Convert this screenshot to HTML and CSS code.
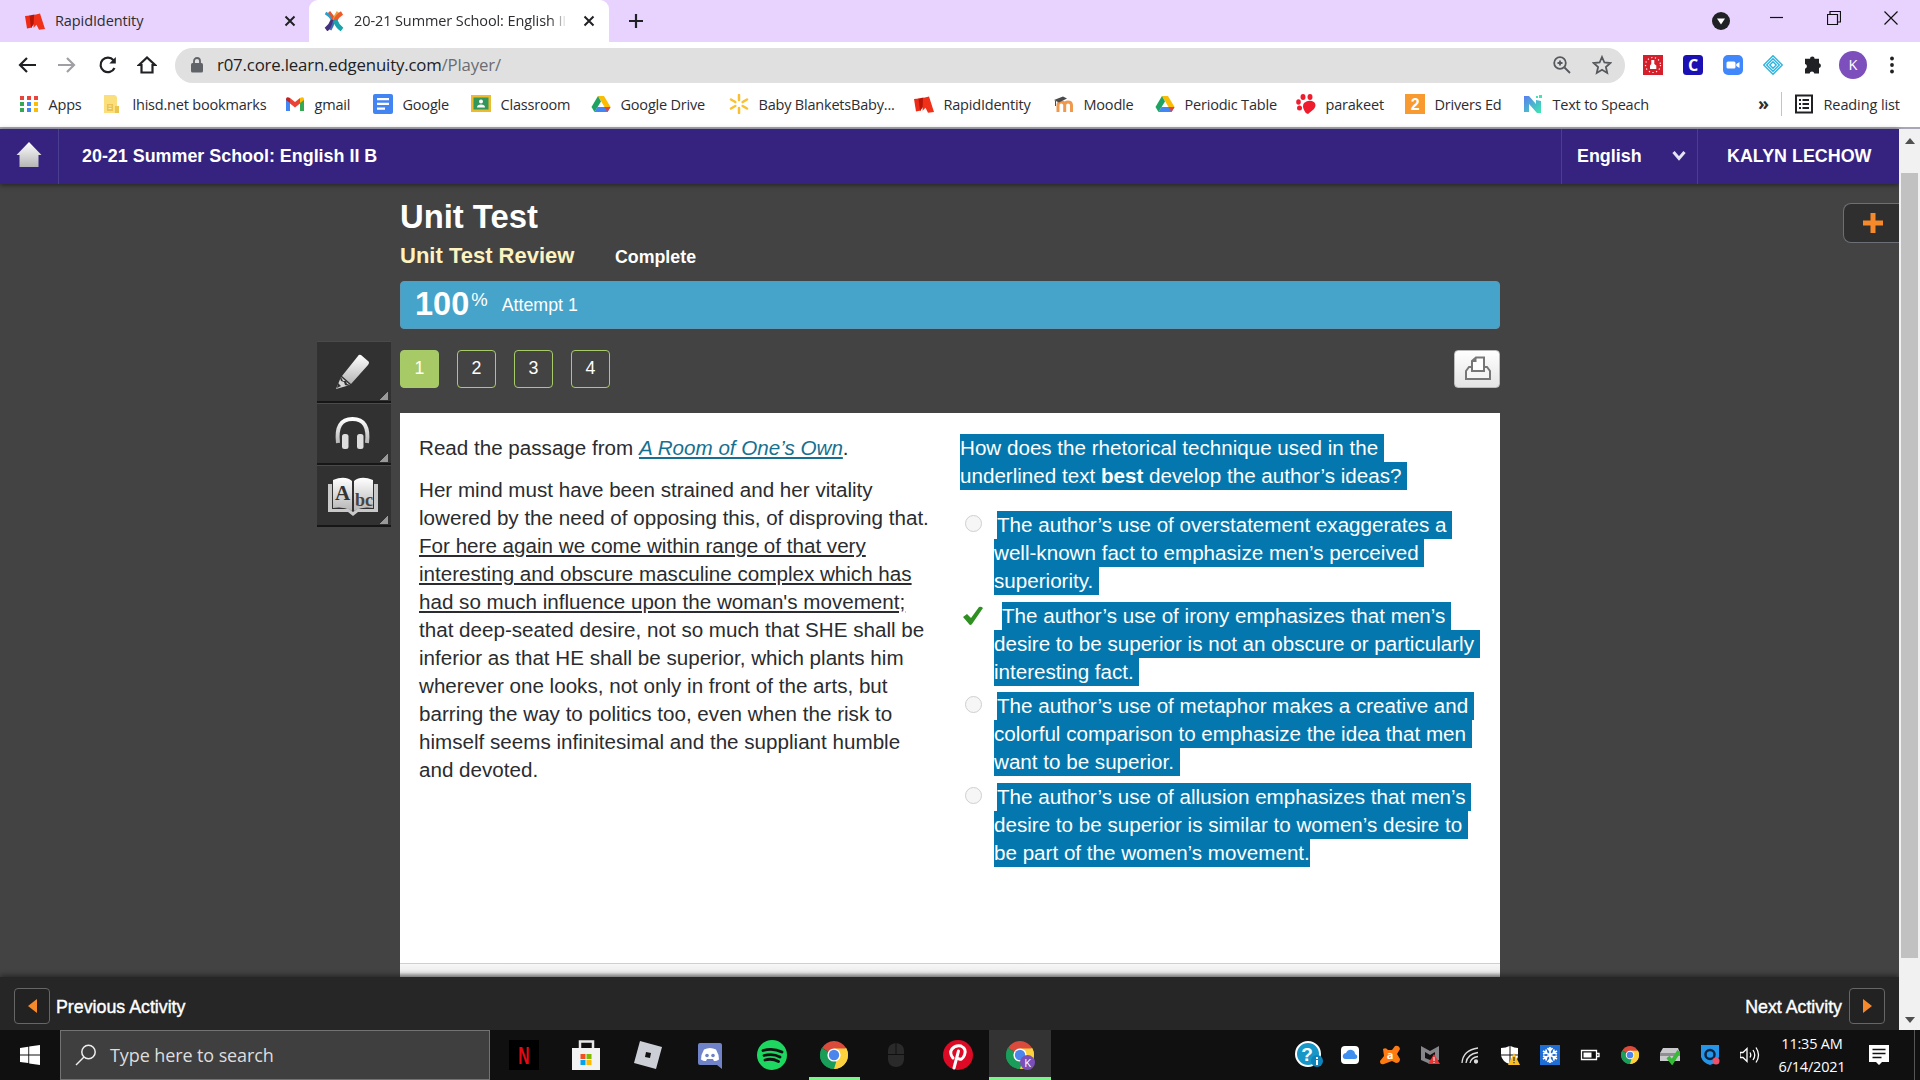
FILE: index.html
```
<!DOCTYPE html>
<html lang="en">

<head>
    <meta charset="UTF-8">
    <link rel="stylesheet" href="styles.css">
    <title>20-21 Summer School: English II B</title>
</head>

<body>
    <!-- shared icons -->
    <svg class="defs" width="0" height="0">
        <defs>
            <linearGradient id="silver" x1="0" y1="0" x2="0" y2="1">
                <stop offset="0" stop-color="#fff" />
                <stop offset="1" stop-color="#b5b5b5" />
            </linearGradient>
            <linearGradient id="ngrad" x1="0" y1="0" x2="1" y2="1">
                <stop offset="0" stop-color="#5b7df0" />
                <stop offset="1" stop-color="#3de8b0" />
            </linearGradient>
            <symbol id="rapid" viewBox="0 0 20 20">
                <path fill="#ee2b16" d="M0 5l5-.5 2 12-5 1z" />
                <path fill="#b71507" d="M4.500 4.500l5-1v9l-3.500 4.500z" />
                <path fill="#f03018" d="M9 4l6-1.500 5 15.500-6 .8-2.500-5-3 3z" />
            </symbol>
            <symbol id="drive" viewBox="0 0 20 20">
                <path fill="#fbbc04" d="M7 2h6l6.500 11h-6z" />
                <path fill="#1ea362" d="M7 2l3 5.500L3.500 18 .5 13z" />
                <path fill="#4285f4" d="M6.500 13h13l-3 5h-13z" />
                <path fill="#ea4335" d="M13.500 13h6l-3 5z" />
            </symbol>
            <symbol id="chrome" viewBox="0 0 28 28">
                <path fill="#db4b3c" d="M14 14L1.900 7A14 14 0 0 1 26.100 7z" />
                <path fill="#fdd13e" d="M14 14L26.100 7A14 14 0 0 1 14 28z" />
                <path fill="#1a9d58" d="M14 14V28A14 14 0 0 1 1.900 7z" />
                <path fill="#fdd13e" d="M14 7.500h12.400a14 14 0 0 1-12.400 20.500l5.800-10.500z" />
                <path fill="#1a9d58" d="M1.900 7l6.400 10.500 8 3L14 28A14 14 0 0 1 1.900 7z" />
                <circle cx="14" cy="14" r="6.600" fill="#fff" />
                <circle cx="14" cy="14" r="5.200" fill="#4c86ec" />
            </symbol>
        </defs>
    </svg>

    <!-- tabs -->
    <div class="tabs">
        <div class="tab">
            <svg class="fav" viewBox="0 0 20 20"><use href="#rapid" /></svg>
            <span class="tab-title">RapidIdentity</span>
            <svg class="x" viewBox="0 0 12 12"><path d="M1.500 1.500l9 9M10.500 1.500l-9 9" /></svg>
        </div>
        <div class="tab active">
            <svg class="fav" viewBox="0 0 20 20">
                <g fill="none">
                    <path stroke="#2a9fd0" stroke-width="3" d="M1.500 2Q7 5 9.500 10" />
                    <path stroke="#e2572d" stroke-width="3" d="M5 1Q9 5 10 10" />
                    <path stroke="#f0a23a" stroke-width="3" d="M14 1Q11 5 10 10" />
                    <path stroke="#ef5a2a" stroke-width="4" d="M18 2Q13 5 11 10" />
                    <path stroke="#47307e" stroke-width="4.500" d="M2 18.500Q7 15 9 9" />
                    <path stroke="#3b6fb5" stroke-width="2" d="M6.500 19Q9 15 10 10" />
                    <path stroke="#17a2ac" stroke-width="4.500" d="M18 18.500Q13 15 11 9" />
                </g>
            </svg>
            <span class="tab-title fade">20-21 Summer School: English II B</span>
            <svg class="x" viewBox="0 0 12 12"><path d="M1.500 1.500l9 9M10.500 1.500l-9 9" /></svg>
        </div>
        <svg class="newtab" viewBox="0 0 16 16"><path d="M8 1v14M1 8h14" /></svg>
        <div class="winbtns">
            <svg viewBox="0 0 20 20" width="20" height="20" class="tabsearch"><circle cx="10" cy="10" r="9" fill="#202124" /><path fill="#fff" d="M6 7.500h8l-4 6z" /></svg>
            <svg viewBox="0 0 14 14" width="14" height="14"><path d="M0 6.500h13" /></svg>
            <svg viewBox="0 0 14 14" width="14" height="14"><path d="M.5 3.500h10v10h-10zM3 3V.5h10.500v10.500H11" /></svg>
            <svg viewBox="0 0 14 14" width="14" height="14"><path d="M.5 .5l13 13M13.500 .5l-13 13" /></svg>
        </div>
    </div>

    <!-- address bar -->
    <div class="toolbar">
        <svg class="nav" viewBox="0 0 20 20"><path d="M19 10H3M10 3l-7 7 7 7" /></svg>
        <svg class="nav off" viewBox="0 0 20 20"><path d="M1 10h16M10 3l7 7-7 7" /></svg>
        <svg class="nav" viewBox="0 0 20 20"><path d="M17.500 13A7.300 7.300 0 1 1 16.500 5.200" /><path d="M18.800 2v6.500h-6.500z" fill="#202124" stroke="none" /></svg>
        <svg class="nav" viewBox="0 0 20 20"><path d="M2 10l8-7.500L18 10h-2.500v7.500h-11V10z" /></svg>
        <div class="address">
            <svg width="12" height="16" viewBox="0 0 12 16"><path fill="none" stroke="#5f6368" stroke-width="1.800" d="M3 7V4a3 3 0 0 1 6 0v3" /><rect y="6" width="12" height="9.500" rx="1.500" fill="#5f6368" /></svg>
            <span class="url">r07.core.learn.edgenuity.com<i>/Player/</i></span>
            <svg class="addr-icon" viewBox="0 0 20 20"><circle cx="8" cy="8" r="5.800" /><path d="M12.500 12.500l5.500 5.500M5.500 8h5M8 5.500v5" /></svg>
            <svg class="addr-icon star" viewBox="0 0 20 20"><path d="M10 2l2.400 5.500 6 .5-4.500 4 1.300 5.900L10 14.800l-5.200 3.100L6.100 12 1.600 8l6-.5z" /></svg>
        </div>
        <div class="exts">
            <svg viewBox="0 0 20 20"><path fill="#d5202c" d="M0 0h20v20H0z" /><circle cx="10" cy="10" r="7.500" fill="none" stroke="#fff" stroke-width="1.200" stroke-dasharray="1.200 2.500" /><path fill="#fff" d="M8.300 5h3v4l2 1.500v3.500H7v-3.500l1.300-1.500z" /></svg>
            <svg viewBox="0 0 20 20"><rect width="20" height="20" rx="3.500" fill="#1b10b4" /><text x="10" y="15.500" class="c">C</text></svg>
            <svg viewBox="0 0 20 20"><rect width="20" height="20" rx="5" fill="#4087fc" /><rect x="3.500" y="6.500" width="9" height="7" rx="1.500" fill="#fff" /><path fill="#fff" d="M13.300 9l3.200-2v6l-3.200-2z" /></svg>
            <svg viewBox="0 0 20 20" fill="none" stroke="#2fb3e0" stroke-width="1.400"><path d="M10 .7l9.300 9.300-9.300 9.300L.7 10zM10 3.700l6.300 6.300-6.300 6.300L3.700 10zM10 6.800l3.200 3.200-3.200 3.200L6.800 10z" /></svg>
            <svg viewBox="0 0 20 20"><path fill="#202124" d="M7 3.800a2.300 2.300 0 0 1 4.600 0h4.400V8.300a2.400 2.400 0 0 1 0 4.700v5.500h-4.700a2.400 2.400 0 0 0-4.700 0H2v-4.800a2.400 2.400 0 0 0 0-4.700V3.800z" /></svg>
        </div>
        <div class="avatar">K</div>
        <svg class="dots" width="6" height="18" viewBox="0 0 6 18"><circle cx="3" cy="2.500" r="1.900" /><circle cx="3" cy="9" r="1.900" /><circle cx="3" cy="15.500" r="1.900" /></svg>
    </div>

    <!-- bookmarks -->
    <div class="bookmarks">
        <div class="bm"><svg viewBox="0 0 20 20"><path fill="#e8453c" d="M1 2h4v4H1zM8 2h4v4H8zM15 2h4v4h-4z" /><path fill="#34a853" d="M1 8h4v4H1z" /><path fill="#4285f4" d="M8 8h4v4H8zM8 14h4v4H8z" /><path fill="#fbbc04" d="M15 8h4v4h-4zM15 14h4v4h-4z" /><path fill="#34a853" d="M1 14h4v4H1z" /></svg><span>Apps</span></div>
        <div class="bm"><svg viewBox="0 0 20 20"><path fill="#fadf7c" d="M1 1h11l2 2v16H1z" /><path fill="#e9c452" d="M4 10h6v7H4zM12 12h4v7h-4z" /><path fill="#fdeeb0" d="M5.500 11.500h3v1h-3zM5.500 14h3v1h-3z" /></svg><span>lhisd.net bookmarks</span></div>
        <div class="bm"><svg viewBox="0 0 20 20"><path fill="#4285f4" d="M1 5l4 3v9H1z" /><path fill="#34a853" d="M15 8l4-3v12h-4z" /><path fill="#ea4335" d="M5 4l5 4 5-4v5.500l-5 4-5-4z" /><path fill="#c5221f" d="M1 4.500Q2 2.500 5 4v5L1 6z" /><path fill="#fbbc04" d="M19 4.500Q18 2.500 15 4v5l4-3z" /></svg><span>gmail</span></div>
        <div class="bm"><svg viewBox="0 0 20 20"><rect width="20" height="20" rx="2" fill="#4384f3" /><path fill="#fff" d="M4 4h12v2.200H4zM4 8.800h12V11H4zM4 13.600h8v2.200H4z" /></svg><span>Google</span></div>
        <div class="bm"><svg viewBox="0 0 20 20"><path fill="#edbb2d" d="M0 1h20v17H0z" /><path fill="#31975a" d="M2.500 3.500h15v12h-15z" /><circle cx="10" cy="7.500" r="2" fill="#fff" /><path fill="#fff" d="M6 13.500q0-3 4-3t4 3z" /></svg><span>Classroom</span></div>
        <div class="bm"><svg viewBox="0 0 20 20"><use href="#drive" /></svg><span>Google Drive</span></div>
        <div class="bm"><svg viewBox="0 0 20 20" fill="none" stroke="#fbc02e" stroke-width="2.500" stroke-linecap="round"><path d="M10 1v5M10 14v5M2 5.500L6.300 8M13.700 12l4.300 2.500M2 14.500L6.300 12M13.700 8L18 5.500" /></svg><span>Baby BlanketsBaby...</span></div>
        <div class="bm"><svg viewBox="0 0 20 20"><use href="#rapid" /></svg><span>RapidIdentity</span></div>
        <div class="bm"><svg viewBox="0 0 20 20"><path fill="none" stroke="#f0994d" stroke-width="3" d="M4 18V11Q4 8 7.300 8T10.700 11V18M10.700 11Q10.700 8 14 8T17.500 11V18" /><path fill="#4a4a4a" d="M0 6l9-3.500 4 2L5 8.500zM1 7h1v5H1z" /></svg><span>Moodle</span></div>
        <div class="bm"><svg viewBox="0 0 20 20"><use href="#drive" /></svg><span>Periodic Table</span></div>
        <div class="bm"><svg viewBox="0 0 20 20" fill="#ee1c2c"><ellipse cx="7" cy="3" rx="2.500" ry="3" /><ellipse cx="14" cy="3" rx="2.500" ry="3" /><ellipse cx="2.500" cy="8" rx="2.300" ry="2.800" /><ellipse cx="3.500" cy="14" rx="2.500" ry="2.500" /><path d="M8 9q5-4 10-1 3 3 0 7l-6 5q-3-1-4-4-2-4 0-7z" /></svg><span>parakeet</span></div>
        <div class="bm"><svg viewBox="0 0 20 20"><path fill="#f89a30" d="M0 0h20v20H0z" /><text x="10" y="16" class="two">2</text></svg><span>Drivers Ed</span></div>
        <div class="bm"><svg viewBox="0 0 20 20"><path fill="url(#ngrad)" d="M1 2h5l7 8V6l5 1v12h-4L6 10v8H1z" /><path fill="#3de8b0" d="M13 2h2v2h-2zM16 1h3v3h-3z" /></svg><span>Text to Speach</span></div>
        <div class="more">&raquo;</div>
        <div class="bm reading"><svg viewBox="0 0 20 20"><rect x="2" y="1.500" width="16" height="17" fill="none" stroke="#202124" stroke-width="2" /><path fill="#202124" d="M5 5h2v2H5zM8.500 5H15v2H8.500zM5 9h2v2H5zM8.500 9H15v2H8.500zM5 13h2v2H5zM8.500 13H15v2H8.500z" /></svg><span>Reading list</span></div>
    </div>

    <div class="viewport">
        <div class="page">
            <div class="header">
                <div class="home"><svg width="26" height="28" viewBox="0 0 26 28"><path fill="url(#silver)" d="M13 1l12.500 13h-3v12h-19V14h-3z" /></svg></div>
                <div class="course">20-21 Summer School: English II B</div>
                <div class="lang">English <svg width="14" height="12" viewBox="0 0 14 12"><path fill="none" stroke="#e4e4f4" stroke-width="3" d="M1.500 2l5.500 6.500L12.500 2" /></svg></div>
                <div class="user">KALYN LECHOW</div>
            </div>

            <div class="content">
                <div class="tools">
                    <div class="tool"><svg width="38" height="38" viewBox="0 0 38 38"><path fill="url(#silver)" d="M27 2l7 6q2 1 0 4L17 31l-9-8L24 3q1-2 3-1z" /><path fill="#d5d5d5" d="M7 24l9 8L2 36z" /><path fill="#333" d="M4 30l3 3-4 2zM7 24l2 4 3 0 1 3 3 1-1 1-4-1-1-3-3-1-1-3z" /></svg></div>
                    <div class="tool"><svg width="38" height="38" viewBox="0 0 38 38"><path fill="none" stroke="url(#silver)" stroke-width="4" d="M4 28Q1 4 18.500 4T33 28" /><rect x="8" y="19" width="6.500" height="15" rx="2.500" fill="#ddd" /><rect x="23" y="19" width="6.500" height="15" rx="2.500" fill="#ddd" /></svg></div>
                    <div class="tool"><svg width="50" height="40" viewBox="0 0 50 40"><path fill="#c9c9c9" d="M0 8h4v25h17l4 3 4-3h17V8h4v28H30l-5 4-5-4H0z" /><path fill="url(#silver)" d="M5 4q12-5 19 1v30q-8-5-19-3zM45 4q-12-5-19 1v30q8-5 19-3z" /><text x="7" y="24" class="bigA">A</text><text x="27" y="30" class="bc">bc</text></svg></div>
                </div>

                <div class="main">
                    <h1>Unit Test</h1>
                    <div class="sub"><h2>Unit Test Review</h2><span>Complete</span></div>
                    <div class="score"><b>100</b><sup>%</sup><span>Attempt 1</span></div>
                    <div class="pager">
                        <a class="on">1</a><a>2</a><a>3</a><a>4</a>
                        <div class="print"><svg width="28" height="26" viewBox="0 0 28 26"><path fill="#f6f6f6" stroke="#777" stroke-width="2" d="M7 11H5l-3 4v8h24v-8l-3-4h-2" /><path fill="#fff" stroke="#777" stroke-width="2" d="M8 15V5l4-3.500h8V15z" /><path fill="#777" d="M7.500 6l5-5v5z" /></svg></div>
                    </div>
                    <div class="card">
                        <div class="cols">
                            <div class="passage">
                                <p>Read the passage from <a>A Room of One’s Own</a>.</p>
                                <p>Her mind must have been strained and her vitality<br>
                                lowered by the need of opposing this, of disproving that.<br>
                                <u>For here again we come within range of that very<br>
                                interesting and obscure masculine complex which has<br>
                                had so much influence upon the woman's movement;</u><br>
                                that deep-seated desire, not so much that SHE shall be<br>
                                inferior as that HE shall be superior, which plants him<br>
                                wherever one looks, not only in front of the arts, but<br>
                                barring the way to politics too, even when the risk to<br>
                                himself seems infinitesimal and the suppliant humble<br>
                                and devoted.</p>
                            </div>
                            <div class="question">
                                <div class="ask">
                                    <span class="sel">How does the rhetorical technique used in the </span>
                                    <span class="sel">underlined text <b>best</b> develop the author’s ideas? </span>
                                </div>
                                <div class="option">
                                    <i class="radio"></i>
                                    <div>
                                        <span class="sel first">The author’s use of overstatement exaggerates a </span>
                                        <span class="sel">well-known fact to emphasize men’s perceived </span>
                                        <span class="sel">superiority. </span>
                                    </div>
                                </div>
                                <div class="option correct">
                                    <svg class="check" width="22" height="20" viewBox="0 0 22 20"><path fill="#2f8f22" d="M1 11l4-3 4 4L17 1q2-1 4 1L10 18q-2 2-3 0z" /></svg>
                                    <div>
                                        <span class="sel first">The author’s use of irony emphasizes that men’s </span>
                                        <span class="sel">desire to be superior is not an obscure or particularly </span>
                                        <span class="sel">interesting fact. </span>
                                    </div>
                                </div>
                                <div class="option">
                                    <i class="radio"></i>
                                    <div>
                                        <span class="sel first">The author’s use of metaphor makes a creative and </span>
                                        <span class="sel">colorful comparison to emphasize the idea that men </span>
                                        <span class="sel">want to be superior. </span>
                                    </div>
                                </div>
                                <div class="option">
                                    <i class="radio"></i>
                                    <div>
                                        <span class="sel first">The author’s use of allusion emphasizes that men’s </span>
                                        <span class="sel">desire to be superior is similar to women’s desire to </span>
                                        <span class="sel">be part of the women’s movement.</span>
                                    </div>
                                </div>
                            </div>
                        </div>
                        <div class="card-foot"></div>
                    </div>
                </div>

                <div class="plus"><svg width="20" height="20" viewBox="0 0 20 20"><path fill="#f68a2a" d="M7.500 0h5v7.500H20v5h-7.500V20h-5v-7.500H0v-5h7.500z" /></svg></div>
            </div>

            <div class="footer">
                <div class="arrow"><svg width="9" height="14" viewBox="0 0 9 14"><path fill="#f68a2a" d="M9 0v14L0 7z" /></svg></div>
                <span>Previous Activity</span>
                <span class="next">Next Activity</span>
                <div class="arrow"><svg width="9" height="14" viewBox="0 0 9 14"><path fill="#f68a2a" d="M0 0v14l9-7z" /></svg></div>
            </div>
        </div>
        <div class="scrollbar">
            <svg width="10" height="6" viewBox="0 0 10 6"><path fill="#505050" d="M5 0l5 6H0z" /></svg>
            <div class="thumb"></div>
            <svg class="down" width="10" height="6" viewBox="0 0 10 6"><path fill="#505050" d="M5 6l5-6H0z" /></svg>
        </div>
    </div>

    <!-- windows taskbar -->
    <div class="taskbar">
        <div class="start"><svg width="20" height="20" viewBox="0 0 20 20"><path fill="#fff" d="M0 3l8.300-1.200v7.700H0zM9.200 1.600L20 0v9.500H9.200zM0 10.400h8.300v7.700L0 17zM9.200 10.400H20V20L9.200 18.400z" /></svg></div>
        <div class="search">
            <svg width="22" height="22" viewBox="0 0 22 22"><circle cx="13.500" cy="8" r="6.700" fill="none" stroke="#eee" stroke-width="1.500" /><path stroke="#eee" stroke-width="1.500" d="M9 13L1 21" /></svg>
            <span>Type here to search</span>
        </div>
        <div class="apps">
            <div><svg viewBox="0 0 30 30"><path fill="#000" d="M0 0h30v30H0z" /><text x="15" y="24" class="nf">N</text></svg></div>
            <div><svg viewBox="0 0 30 30"><path fill="none" stroke="#e8e8e8" stroke-width="2.500" d="M9 9V1.500h13V9" /><path fill="#f2f2f2" d="M1 8h28v22H1z" /><path fill="#f25022" d="M9.500 14h5v5h-5z" /><path fill="#7fba00" d="M15.500 14h5v5h-5z" /><path fill="#00a4ef" d="M9.500 20h5v5h-5z" /><path fill="#ffb900" d="M15.500 20h5v5h-5z" /></svg></div>
            <div><svg viewBox="0 0 30 30"><path fill="#ccd0d6" d="M7 1l22 6-6 22-22-6z" /><path fill="#111" d="M13 12l5 1-1 5-5-1z" /></svg></div>
            <div><svg viewBox="0 0 30 30"><path fill="#7083c8" d="M5 3h20q2 0 2 2v24l-5-4H5q-2 0-2-2V5q0-2 2-2z" /><path fill="#fff" d="M9 9.500q6-3 12 0 3 5 3 10-3 2-5 1.500l-1-2h-6l-1 2q-2 .5-5-1.500 0-5 3-10z" /><circle cx="12" cy="15.500" r="1.800" fill="#7083c8" /><circle cx="18" cy="15.500" r="1.800" fill="#7083c8" /></svg></div>
            <div><svg viewBox="0 0 30 30"><circle cx="15" cy="15" r="15" fill="#1ed760" /><path fill="none" stroke="#111" stroke-width="2.800" stroke-linecap="round" d="M6 10.500Q16 7.500 25 12M7 15.500Q16 13 23 17M8 20Q15 18 21.500 21.500" /></svg></div>
            <div class="open"><svg viewBox="-1 -1 30 30"><use href="#chrome" width="28" height="28" /></svg></div>
            <div><svg viewBox="0 0 30 30" fill="#2a2a2a"><path d="M14.500 3v11H7v-3q0-7 7.500-8zM15.500 3v11H23v-3q0-7-7.500-8zM7 15h16v5q-1 7-8 7t-8-7z" /></svg></div>
            <div><svg viewBox="0 0 30 30"><circle cx="15" cy="15" r="15" fill="#dc0a25" /><path fill="none" stroke="#fff" stroke-width="3" stroke-linecap="round" d="M10 18Q6 13 9 9T18 6Q24 9 21.500 15T15 18.500M15.500 11L11 28" /></svg></div>
            <div class="open current"><svg viewBox="-1 -1 30 30"><use href="#chrome" width="28" height="28" /><circle cx="21.500" cy="21.500" r="7.500" fill="#7a4fb8" /><text x="21.500" y="25.500" class="k">K</text></svg></div>
        </div>
        <div class="tray">
            <svg class="big" viewBox="0 0 28 28"><circle cx="13" cy="13" r="12" fill="#1797c8" stroke="#fff" stroke-width="2" /><text x="12" y="20" class="q">?</text><circle cx="22" cy="20" r="6" fill="#0e84bc" /><path fill="#fff" d="M21 16h2v2h-2zM21 19h2v5h-2z" /></svg>
            <svg viewBox="0 0 20 20"><rect x="1" y="1" width="18" height="18" rx="4" fill="#fff" /><path fill="#3f8ff0" d="M5 14q-3-1-2-4 1-2 3-2 2-4 6-3 3 1 3 4 3 1 2 4-1 1-2 1z" /></svg>
            <svg viewBox="0 0 20 20"><path fill="#ff7a10" d="M3 4q3-2 5 1h4l3-4q4-1 5 3l-3 5 3 5q0 4-4 4l-4-2-8 3q-4 1-4-3l4-5z" /><text x="10" y="14" class="a">a</text></svg>
            <svg viewBox="0 0 20 20"><path fill="#85858a" d="M1 1l9 5 9-5v14l-9 4-9-4z" /><path fill="#111" d="M5 7l5 3 5-3v6l-5 2-5-2z" /><path fill="#e93434" d="M14 9l6 10H8z" /><path fill="#fff" d="M13.500 12h1v4h-1zM13.500 17h1v1h-1z" /></svg>
            <svg viewBox="0 0 20 20" fill="none" stroke="#ddd" stroke-width="1.300"><path d="M2 18Q3 5 18 3M6 18Q7 9 18 7.500M10 18Q11 12.500 18 11.500" /><circle cx="16" cy="16.500" r="1.500" fill="#ddd" /></svg>
            <svg viewBox="0 0 20 20"><path fill="#fff" d="M9.500 1v8.500H1V3q5 0 8.500-2zM10.500 1q4 2 7.500 2v6.500h-7.500zM1 10.500h8.500v8.500q-7-2-8.500-8.500zM10.500 10.500H18q0 6-7.500 8.500z" /><path fill="#fbbf26" d="M14 8l6 12H8z" /><path fill="#333" d="M13.400 12h1.200v4h-1.200zM13.400 17h1.200v1.200h-1.200z" /></svg>
            <svg viewBox="0 0 20 20"><path fill="#1f6ed6" d="M0 0h20v20H0z" /><path fill="none" stroke="#fff" stroke-width="1.700" d="M10 2v16M3 6l14 8M17 6L3 14M7.500 3L10 6l2.500-3M7.500 17l2.500-3 2.500 3M3 9l3.500-1L6 4.500M17 9l-3.500-1 .5-3.500M3 11l3.500 1-.5 3.500M17 11l-3.500 1 .5 3.500" /></svg>
            <svg viewBox="0 0 20 20"><path fill="none" stroke="#fff" stroke-width="1.300" d="M1.500 5.500h15v9h-15zM17 8.500h2v3h-2" /><path fill="#fff" d="M3.500 7.500h8v5h-8z" /></svg>
            <svg viewBox="0 0 20 20"><use href="#chrome" x="1" y="1" width="18" height="18" /></svg>
            <svg viewBox="0 0 20 20"><path fill="#c9c9cc" d="M3 3h15l2 5v8H0V8z" /><path fill="#8e8e93" d="M0 8h20v3H0z" /><path fill="none" stroke="#38ba38" stroke-width="4" d="M8 12l4 5 7-11" /></svg>
            <svg viewBox="0 0 20 20"><path fill="#2495e8" d="M1 0h18v12q-2 6-9 8-7-2-9-8z" /><circle cx="10" cy="9.500" r="4.500" fill="none" stroke="#0c2340" stroke-width="2.500" /><circle cx="16" cy="16" r="3.500" fill="#f1506b" /></svg>
            <svg viewBox="0 0 20 20" fill="none" stroke="#fff" stroke-width="1.300"><path d="M0 7.500h3L7 3.500v13l-4-4H0zM10 7.500q1.500 2.500 0 5M13 5q3.500 5 0 10M16 2.500q5 7.500 0 15" /></svg>
        </div>
        <div class="clock">11:35 AM<br>6/14/2021</div>
        <svg class="notes" width="20" height="20" viewBox="0 0 20 20"><path fill="#fff" d="M0 0h20v17h-7l-3 3-3-3H0z" /><path stroke="#111" stroke-width="1.500" d="M3.500 4.500h13M3.500 8.500h13M3.500 12.500h9" /></svg>
        <div class="desk"></div>
    </div>
</body>

</html>
```
FILE: styles.css
```
* {
    box-sizing: border-box;
}

body {
    margin: 0;
    width: 1920px;
    height: 1080px;
    overflow: hidden;
    display: flex;
    flex-direction: column;
    font-family: "Open Sans", "Noto Sans", sans-serif;
    font-size: 14.5px;
    color: #2c2d31;
    background: #fff;
}

svg {
    flex: none;
    display: block;
}

.defs {
    position: absolute;
}

/* tabs */
.tabs {
    height: 42px;
    flex: none;
    display: flex;
    align-items: center;
    background: #e8d3fe;
}

.tab {
    width: 309px;
    height: 42px;
    display: flex;
    align-items: center;
    padding: 0 13px 0 25px;
    letter-spacing: -.1px;
}

.tab.active {
    width: 300px;
    padding: 0 14px 0 15px;
    background: #fff;
    border-radius: 9px 9px 0 0;
}

.fav {
    width: 20px;
    height: 20px;
    margin-right: 10px;
}

.tab-title {
    flex: 1;
    white-space: nowrap;
    overflow: hidden;
    padding-bottom: 2px;
}

.tab-title.fade {
    flex: none;
    width: 213px;
    margin-right: 16px;
    -webkit-mask-image: linear-gradient(to right, #000 92%, transparent);
    mask-image: linear-gradient(to right, #000 92%, transparent);
}

.x {
    width: 12px;
    height: 12px;
    fill: none;
    stroke: #202124;
    stroke-width: 2;
}

.tab .x {
    margin-left: auto;
}

.newtab {
    width: 16px;
    height: 16px;
    margin-left: 19px;
    fill: none;
    stroke: #202124;
    stroke-width: 2.2;
}

.winbtns {
    margin-left: auto;
    display: flex;
    align-items: center;
    padding-right: 22px;
    padding-bottom: 6px;
    fill: none;
    stroke: #111;
    stroke-width: 1.2;
    gap: 43px;
}

.tabsearch {
    stroke: none;
    margin-top: 6px;
    margin-right: -4px;
}

/* address bar */
.toolbar {
    height: 46px;
    flex: none;
    display: flex;
    align-items: center;
    padding-left: 17px;
}

.nav {
    width: 20px;
    height: 20px;
    margin-right: 20px;
    fill: none;
    stroke: #202124;
    stroke-width: 2.2;
}

.nav.off {
    stroke: #a0a0a4;
}

.address {
    width: 1450px;
    height: 35px;
    border-radius: 18px;
    background: #e0e0e0;
    display: flex;
    align-items: center;
    padding: 0 13px 0 16px;
    margin-left: -2px;
}

.url {
    flex: 1;
    margin-left: 14px;
    padding-bottom: 2px;
    font-size: 16.8px;
    color: #202124;
    letter-spacing: -.17px;
}

.url i {
    font-style: normal;
    color: #6a6d72;
}

.addr-icon {
    width: 20px;
    height: 20px;
    margin-left: 20px;
    fill: none;
    stroke: #55585d;
    stroke-width: 1.8;
}

.exts {
    display: flex;
    gap: 20px;
    margin-left: 18px;
}

.exts svg {
    width: 20px;
    height: 20px;
}

.avatar {
    width: 28px;
    height: 28px;
    margin-left: 16px;
    border-radius: 50%;
    background: #7c4fbd;
    color: #fff;
    text-align: center;
    line-height: 28px;
}

.dots {
    margin-left: 22px;
    fill: #202124;
}

.c {
    font: bold 16px "Open Sans", sans-serif;
    text-anchor: middle;
    fill: #fff;
}

/* bookmarks */
.bookmarks {
    height: 41px;
    flex: none;
    display: grid;
    grid-template-columns: 84px 182px 88px 98px 120px 138px 185px 140px 101px 141px 109px 118px 235px 23px 132px;
    padding-left: 19px;
    padding-bottom: 7px;
    align-items: center;
    border-bottom: 2px solid #a9a6b8;
    letter-spacing: -.2px;
}

.bm {
    display: flex;
    align-items: center;
    white-space: nowrap;
}

.bm svg {
    width: 20px;
    height: 20px;
    margin-right: 9.5px;
}

.two {
    font: bold 16px "Liberation Sans", sans-serif;
    text-anchor: middle;
    fill: #fff;
}

.more {
    font-size: 18px;
    font-weight: bold;
    line-height: 20px;
    padding-bottom: 3px;
}

.reading {
    border-left: 1px solid #c4c4c8;
    padding: 2px 0 2px 12px;
    letter-spacing: -.1px;
}

/* page */
.viewport {
    height: 901px;
    flex: none;
    display: flex;
    font-family: "Liberation Sans", Arial, sans-serif;
    font-size: 17.8px;
}

.page {
    width: 1899px;
    display: flex;
    flex-direction: column;
    background: #434343;
    color: #fff;
}

.header {
    height: 55px;
    flex: none;
    display: flex;
    align-items: stretch;
    background: #35237f;
    font-weight: bold;
    font-size: 17.9px;
    line-height: 54px;
    box-shadow: 0 1px 5px rgba(0, 0, 0, .5);
}

.home {
    width: 59px;
    padding: 12px 16px;
    border-right: 1px solid #4b3d8f;
}

.course {
    flex: 1;
    padding-left: 23px;
}

.lang {
    width: 137px;
    padding: 0 0 1px 15px;
    display: flex;
    align-items: center;
    gap: 30px;
    border-left: 1px solid #4b3d8f;
    border-right: 1px solid #4b3d8f;
}

.user {
    width: 201px;
    padding-left: 29px;
}

.content {
    height: 793px;
    flex: none;
    display: flex;
    align-items: flex-start;
    overflow: hidden;
}

.tools {
    width: 74px;
    margin: 157px 9px 0 317px;
}

.tool {
    height: 62px;
    display: flex;
    align-items: center;
    justify-content: center;
    padding-right: 2px;
    background: linear-gradient(135deg, transparent 50%, #999 50%) right 3px bottom 1px / 8px 8px no-repeat #313131;
    border-bottom: 2px solid #161616;
    border-top: 1px solid #4a4a4a;
}

.bigA {
    font: bold 21px "Liberation Serif", serif;
    fill: #333;
}

.bc {
    font: bold 18px "Liberation Serif", serif;
    fill: #444;
}

.main {
    width: 1100px;
}

h1 {
    margin: 14px 0 0;
    font-size: 32.8px;
    line-height: 37px;
}

.sub {
    display: flex;
    align-items: baseline;
    margin-top: 7px;
    line-height: 28px;
    font-weight: bold;
}

.sub h2 {
    margin: 0;
    width: 215px;
    font-size: 22px;
    color: #fdf3c0;
}

.score {
    height: 48px;
    margin-top: 10px;
    padding-left: 14px;
    display: flex;
    align-items: center;
    background: #46a3c9;
    border: 1px solid #5d9ab8;
    border-radius: 4px;
}

.score b {
    font-size: 32.5px;
    padding-bottom: 2px;
}

.score sup {
    margin: 0 14px 10px 2px;
    font-size: 18.5px;
    line-height: 18px;
}

.pager {
    display: flex;
    gap: 18px;
    margin-top: 21px;
}

.pager a {
    width: 39px;
    height: 38px;
    border: 1.5px solid #a8cb6a;
    border-radius: 4px;
    text-align: center;
    line-height: 34px;
}

.pager a.on {
    background: #a7ca67;
}

.print {
    width: 46px;
    height: 38px;
    margin-left: auto;
    padding: 5px 0 0 9px;
    border-radius: 4px;
    border: 1px solid #bbb;
    background: linear-gradient(#fff, #e4e4e4);
}

.card {
    height: 565px;
    margin-top: 25px;
    background: #fff;
    color: #2a2c30;
    font-size: 20.62px;
    line-height: 28px;
    display: flex;
    flex-direction: column;
}

.cols {
    flex: 1;
    display: flex;
    padding: 21px 0 0 19px;
    white-space: nowrap;
}

.passage {
    width: 541px;
}

.passage p {
    margin: 0 0 14px;
}

.passage a {
    color: #17708f;
    font-style: italic;
    text-decoration: underline;
}

.passage a,
.passage u {
    text-decoration-thickness: 2px;
    text-underline-offset: 2px;
}

.ask {
    margin-bottom: 21px;
}

/* selected text */
.sel {
    display: block;
    width: fit-content;
    height: 28px;
    white-space: pre;
    background: #0478ae;
    color: #fff;
}

.option {
    display: flex;
    margin-bottom: 6.5px;
}

.option .first {
    margin-left: 3px;
}

.correct .first {
    margin-left: 8px;
}

.radio {
    width: 17px;
    height: 17px;
    margin: 4px 12px 0 5px;
    border: 1.5px solid #cfcfcf;
    border-radius: 50%;
    background: #f6f6f6;
}

.check {
    margin: 4px 10px 0 2px;
}

.card-foot {
    height: 15px;
    border-top: 1px solid #cfcfcf;
    background: linear-gradient(#f7f7f7, #ececec 60%, #aaa);
}

.plus {
    width: 56px;
    height: 40px;
    margin: 19px 0 0 auto;
    padding: 9px 0 0 19px;
    background: #2f2f2f;
    border: 1px solid #6b7076;
    border-right: 0;
    border-radius: 8px 0 0 8px;
}

.footer {
    height: 53px;
    display: flex;
    align-items: center;
    padding: 4px 14px 0;
    background: #262626;
    box-shadow: 0 -2px 5px rgba(0, 0, 0, .4);
    -webkit-text-stroke: .4px #fff;
}

.footer span {
    padding-top: 3px;
}

.arrow {
    width: 36px;
    height: 36px;
    display: flex;
    align-items: center;
    justify-content: center;
    margin-right: 6px;
    border: 1.5px solid #666;
    border-radius: 4px;
    background: #222;
}

.next {
    margin: 0 7px 0 auto;
}

.next + .arrow {
    margin-right: 0;
}

.scrollbar {
    width: 21px;
    display: flex;
    flex-direction: column;
    align-items: center;
    background: #f1f1f1;
    padding: 9px 0 7px;
}

.thumb {
    width: 17px;
    height: 785px;
    margin-top: 29px;
    background: #c1c1c1;
}

.down {
    margin-top: auto;
}

/* taskbar */
.taskbar {
    height: 50px;
    display: flex;
    align-items: center;
    background: #101010;
    color: #fff;
}

.start {
    width: 60px;
    padding-left: 20px;
}

.search {
    width: 430px;
    height: 50px;
    display: flex;
    align-items: center;
    gap: 13px;
    padding-left: 14px;
    margin-right: 3px;
    background: #3f3f3f;
    border: 1px solid #737373;
    font-size: 18px;
    letter-spacing: -.1px;
    color: #ddd;
}

.apps {
    display: flex;
}

.apps div {
    width: 62px;
    height: 50px;
    display: flex;
    align-items: center;
    justify-content: center;
}

.apps svg {
    width: 30px;
    height: 30px;
}

.apps .open {
    background: linear-gradient(#7bf48a, #7bf48a) center bottom / 51px 3px no-repeat;
}

.apps .current {
    background-color: #333;
    background-size: 62px 3px;
}

.nf {
    font: bold 24px "Liberation Sans", sans-serif;
    text-anchor: middle;
    fill: #e50914;
    transform: scaleX(.65);
    transform-origin: 15px 15px;
}

.k {
    font: 11px "Open Sans", sans-serif;
    text-anchor: middle;
    fill: #fff;
}

.tray {
    display: flex;
    align-items: center;
    gap: 20px;
    margin-left: 244px;
}

.tray svg {
    width: 20px;
    height: 20px;
}

.tray .big {
    width: 28px;
    height: 28px;
    margin: 0 -3px 0 0;
}

.q {
    font: bold 19px "Liberation Sans", sans-serif;
    text-anchor: middle;
    fill: #fff;
}

.a {
    font: bold 11px "Open Sans", sans-serif;
    text-anchor: middle;
    fill: #fff;
}

.clock {
    width: 84px;
    margin-left: 10px;
    text-align: center;
    font-size: 14.5px;
    line-height: 23px;
    letter-spacing: -.2px;
}

.notes {
    margin-left: 15px;
}

.desk {
    margin-left: auto;
    width: 6px;
    height: 50px;
    border-left: 1px solid #555;
}
```
